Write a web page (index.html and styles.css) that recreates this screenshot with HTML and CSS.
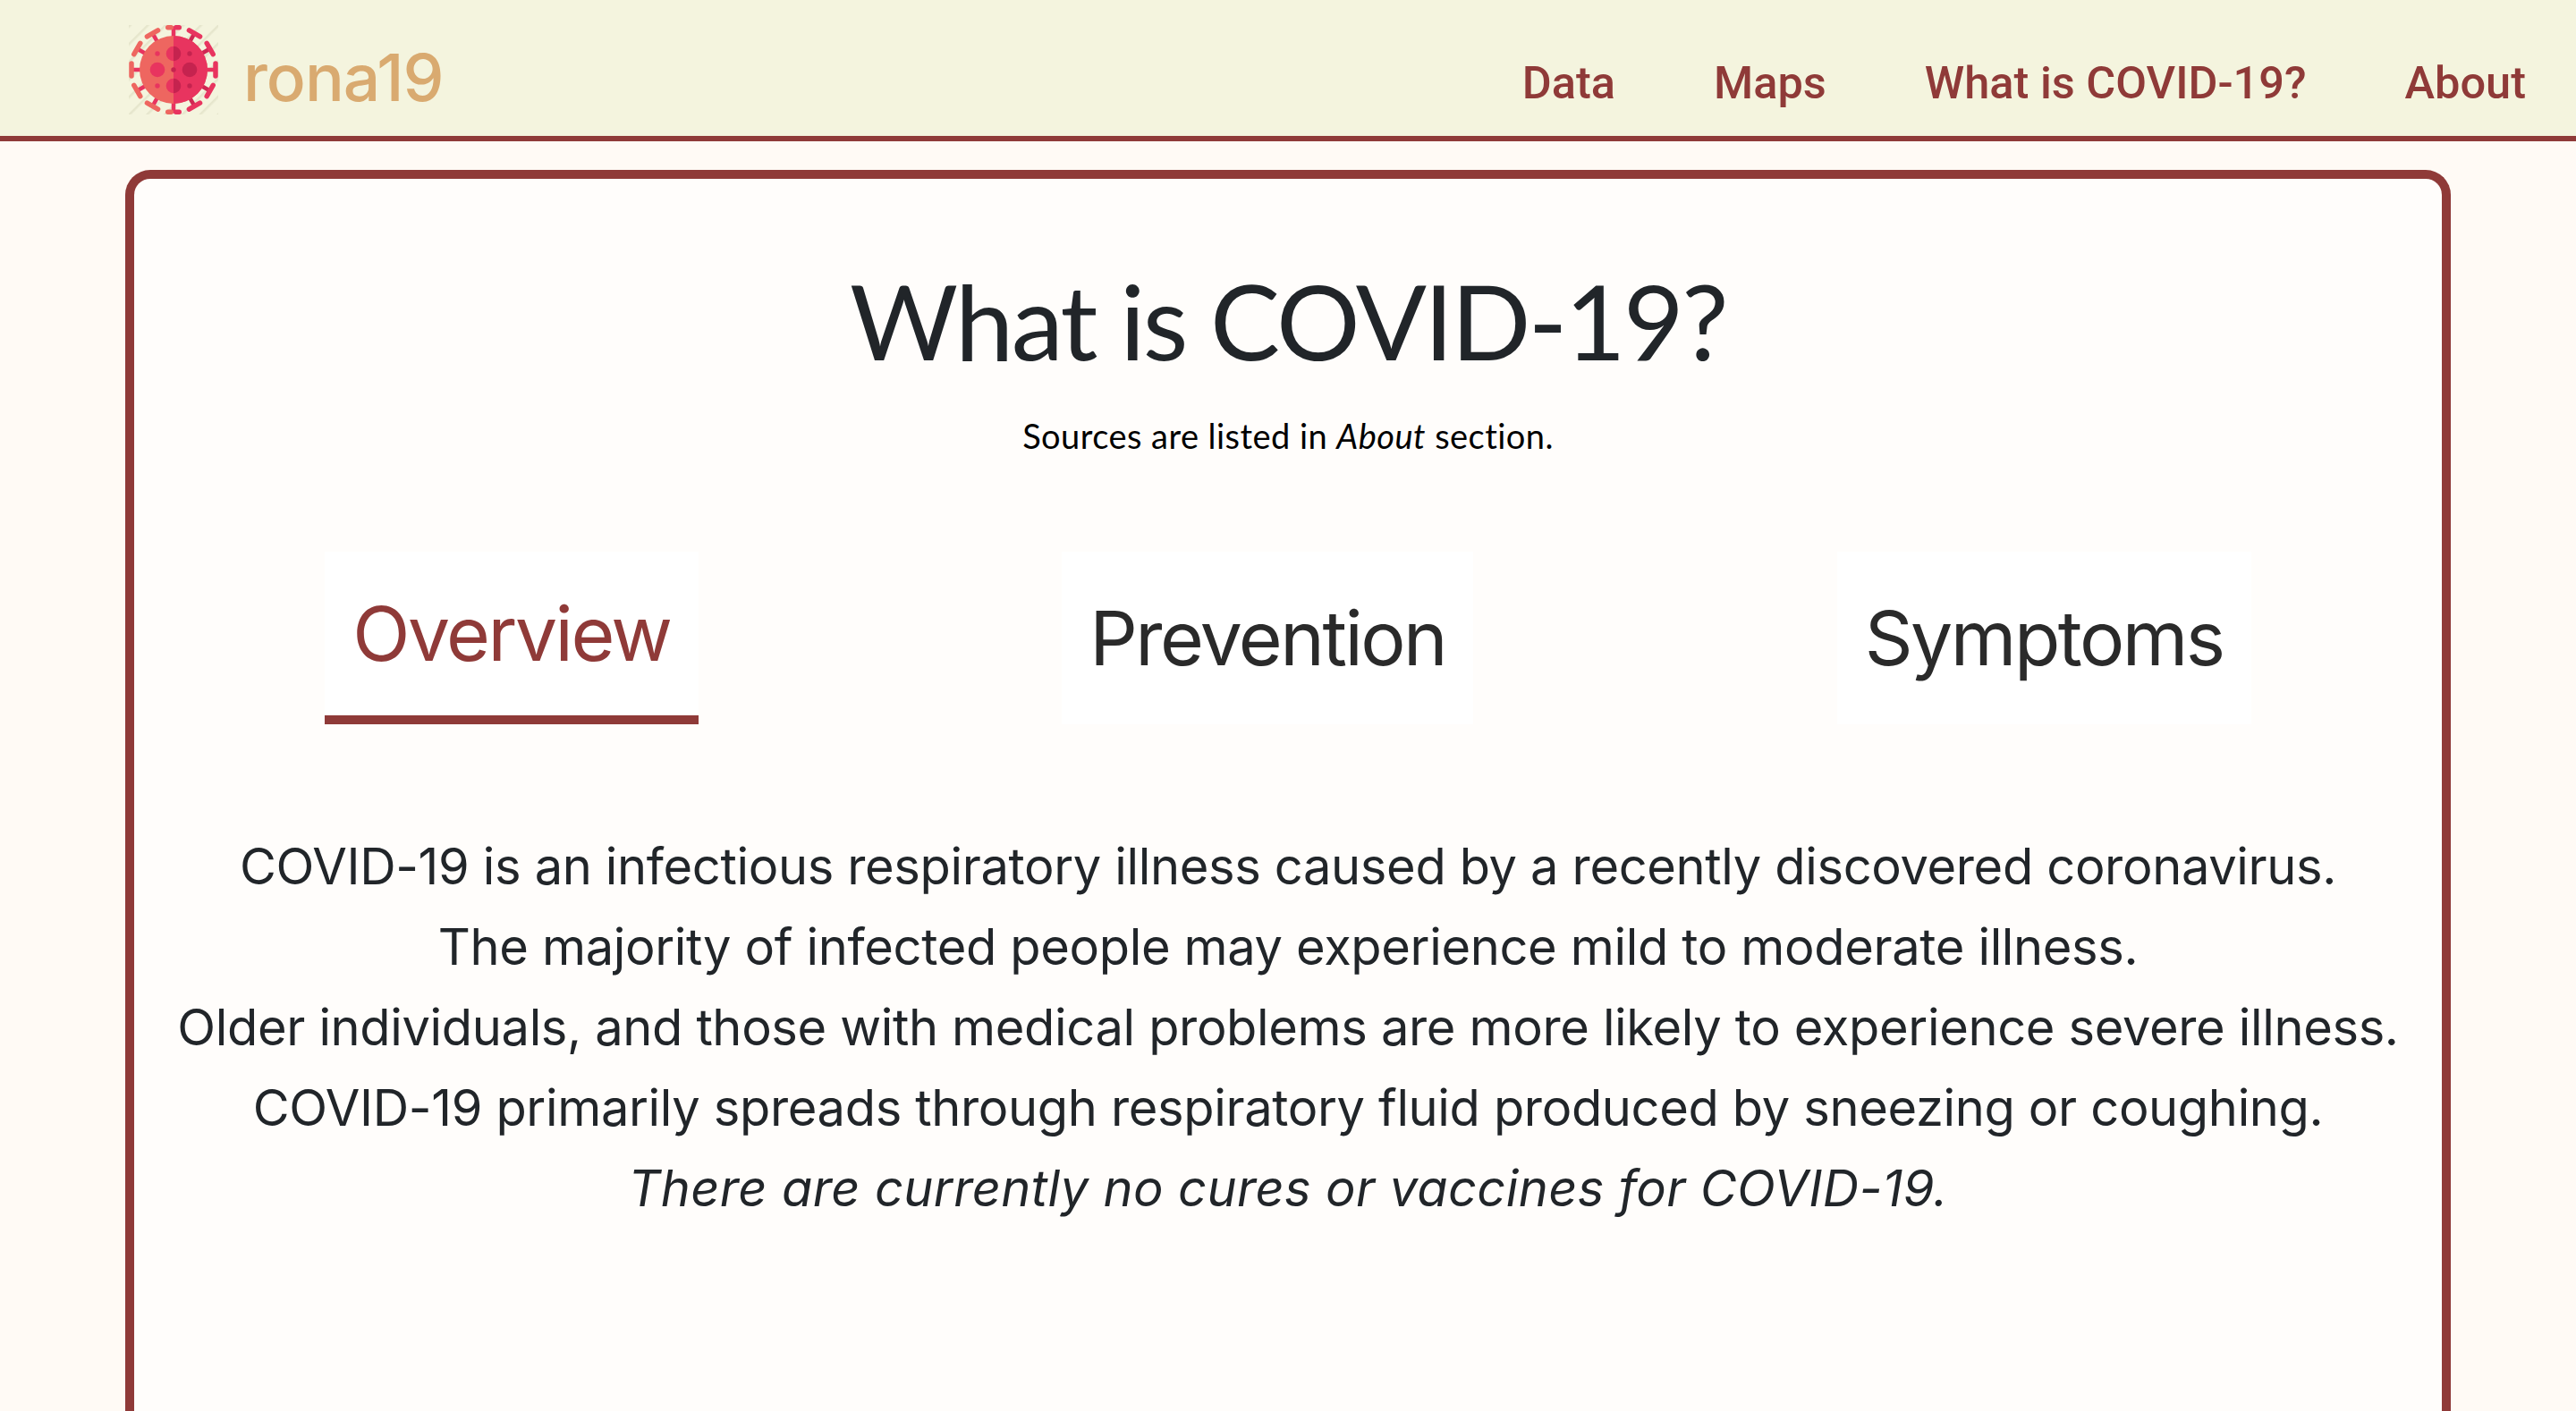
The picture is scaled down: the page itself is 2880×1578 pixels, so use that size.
FILE: index.html
```html
<!DOCTYPE html>
<html>
  <head>
    <title>rona19</title>
    <link rel="stylesheet" href="styles.css">
  </head>
  <body>
    <!-- Top bar -->
    <header class="topbar">
      <a class="brand" href="#">
        <svg class="brand-icon" viewBox="0 0 100 100">
          <defs>
            <g id="spike-left">
              <path d="M50 14V2" stroke="#e8345f" stroke-width="4.5"/>
              <path d="M43 3H57" stroke="#ee6660" stroke-width="5.5" stroke-linecap="round"/>
            </g>
            <g id="spike-right">
              <path d="M50 14V2" stroke="#cf2853" stroke-width="4.5"/>
              <path d="M43 3H57" stroke="#e8345f" stroke-width="5.5" stroke-linecap="round"/>
            </g>
            <pattern id="hatch" width="14" height="14" patternUnits="userSpaceOnUse" patternTransform="rotate(45)">
              <rect width="2.5" height="14" fill="#8a8a5a"/>
            </pattern>
          </defs>
          <rect width="100" height="100" fill="url(#hatch)" opacity="0.13"/>
          <use href="#spike-right" transform="rotate(30 50 50)"/>
          <use href="#spike-right" transform="rotate(60 50 50)"/>
          <use href="#spike-right" transform="rotate(120 50 50)"/>
          <use href="#spike-right" transform="rotate(150 50 50)"/>
          <use href="#spike-left" transform="rotate(210 50 50)"/>
          <use href="#spike-left" transform="rotate(240 50 50)"/>
          <use href="#spike-left" transform="rotate(300 50 50)"/>
          <use href="#spike-left" transform="rotate(330 50 50)"/>
          <path d="M2 50H14M86 50H98" stroke="#e8345f" stroke-width="4.5"/>
          <path d="M3 43V57" stroke="#ee6660" stroke-width="5.5" stroke-linecap="round"/>
          <path d="M97 43V57" stroke="#e8345f" stroke-width="5.5" stroke-linecap="round"/>
          <path d="M50 1.5V14M50 86V98.5" stroke="#e8345f" stroke-width="4.5"/>
          <rect x="41" y="0" width="9" height="5.5" rx="2.7" fill="#ee6660"/>
          <rect x="50" y="0" width="9" height="5.5" rx="2.7" fill="#e8345f"/>
          <rect x="41" y="94.5" width="9" height="5.5" rx="2.7" fill="#ee6660"/>
          <rect x="50" y="94.5" width="9" height="5.5" rx="2.7" fill="#e8345f"/>
          <circle cx="50" cy="50" r="38" fill="#ee6660"/>
          <path d="M50 12a38 38 0 0 1 0 76z" fill="#e8345f"/>
          <g fill="#e8345f">
            <circle cx="32" cy="50" r="8.3"/>
            <path d="M50 23.7a8.3 8.3 0 0 0 0 16.6zM50 59.7a8.3 8.3 0 0 0 0 16.6z"/>
            <circle cx="32" cy="32" r="2.7"/>
            <circle cx="32" cy="68" r="2.7"/>
          </g>
          <g fill="#c5234f">
            <circle cx="68" cy="50" r="8.3"/>
            <path d="M50 23.7a8.3 8.3 0 0 1 0 16.6zM50 59.7a8.3 8.3 0 0 1 0 16.6z"/>
            <circle cx="50" cy="50" r="2.7"/>
            <circle cx="68" cy="32" r="2.7"/>
            <circle cx="68" cy="68" r="2.7"/>
          </g>
        </svg>
        <span class="brand-name">rona19</span>
      </a>
      <nav class="nav">
        <a href="#">Data</a>
        <a href="#">Maps</a>
        <a href="#">What is COVID-19?</a>
        <a href="#">About</a>
      </nav>
    </header>

    <!-- Main card -->
    <main class="card">
      <h1>What is COVID-19?</h1>
      <p class="sources">Sources are listed in <em>About</em> section.</p>

      <div class="tabs">
        <a class="tab active" href="#">Overview</a>
        <a class="tab" href="#">Prevention</a>
        <a class="tab" href="#">Symptoms</a>
      </div>

      <div class="overview">
        <p>COVID-19 is an infectious respiratory illness caused by a recently discovered coronavirus.</p>
        <p>The majority of infected people may experience mild to moderate illness.</p>
        <p>Older individuals, and those with medical problems are more likely to experience severe illness.</p>
        <p>COVID-19 primarily spreads through respiratory fluid produced by sneezing or coughing.</p>
        <p class="no-cure">There are currently no cures or vaccines for COVID-19.</p>
      </div>
    </main>
  </body>
</html>
```

FILE: styles.css
```css
html,
body {
  height: 100%;
}
body {
  display: flex;
  flex-direction: column;
  box-sizing: border-box;
  margin: 0;
  overflow: hidden;
  background-color: #fffaf5;
  color: #212529;
  font-family: "Inter", sans-serif;
}
a {
  text-decoration: none;
}

.topbar {
  display: flex;
  justify-content: space-between;
  align-items: flex-start;
  flex-shrink: 0;
  height: 152px;
  padding: 0 56px 0 144px;
  background-color: #f4f4de;
  border-bottom: 6px solid #8f3a38;
}
.brand {
  display: flex;
  align-items: flex-start;
  gap: 28px;
  padding-top: 28px;
}
.brand-icon {
  width: 100px;
  height: 100px;
}
.brand-name {
  margin-top: 9px;
  color: #d9aa70;
  font-size: 73px;
  font-weight: 500;
  line-height: 100px;
  letter-spacing: -0.014em;
}
.nav {
  display: flex;
  gap: 110px;
  margin-top: 63px;
}
.nav a {
  color: #8f3a38;
  font-family: "Roboto", sans-serif;
  font-size: 50.5px;
  font-weight: 500;
  line-height: 60px;
}

.card {
  flex: 1;
  margin: 32px 140px 0;
  background-color: #fffdfb;
  border: 10px solid #8f3a38;
  border-bottom: none;
  border-radius: 28px 28px 0 0;
  text-align: center;
}
.card h1 {
  margin: 88px 0 0;
  font-family: "Lato", sans-serif;
  font-size: 117px;
  font-weight: 400;
  line-height: 140px;
  letter-spacing: -2.6px;
}
.sources {
  margin: 36px 0 0;
  color: #000;
  font-family: "Lato", sans-serif;
  font-size: 38px;
  letter-spacing: 0.45px;
}

.tabs {
  display: flex;
  justify-content: space-around;
  margin-top: 107px;
  padding: 0 10px;
}
.tab {
  display: flex;
  align-items: center;
  box-sizing: border-box;
  height: 193px;
  padding: 0 31px;
  background-color: #fff;
  color: #2a2a2a;
  font-size: 84px;
  letter-spacing: -0.03em;
}
.tab.active {
  color: #8f3a38;
  border-bottom: 10px solid #8f3a38;
}

.overview {
  margin-top: 114px;
  font-size: 56px;
  line-height: 90px;
  letter-spacing: -0.35px;
}
.overview p {
  margin: 0;
}
.overview .no-cure {
  font-style: italic;
  letter-spacing: 0.35px;
}
```
